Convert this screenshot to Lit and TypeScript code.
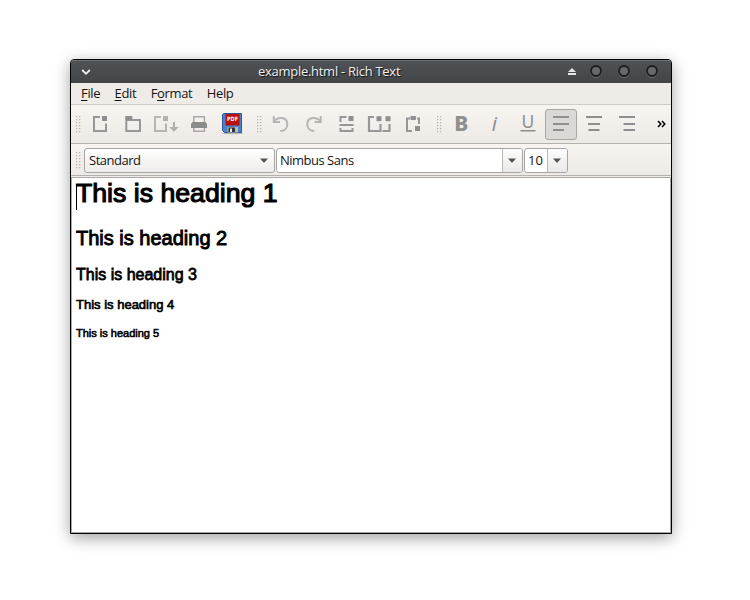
import { LitElement, html, css, svg } from "lit";
import { customElement } from "lit/decorators.js";

type Tool = { id: string; dim?: boolean; active?: boolean; art: unknown };

// Every glyph is drawn in a 32x31 button cell.
const fileTools: Tool[] = [
  { id: "New", art: svg`<path d="M15 8H9V22H21V14.5" fill="none" stroke="#979797" stroke-width="2"/><rect x="17" y="7" width="5" height="5"/>` },
  { id: "Open", art: svg`<path d="M8.3 11H22V22H8.3Z" fill="none" stroke="#979797" stroke-width="2"/><path d="M7.3 7H14.3V11H7.3Z"/>` },
  { id: "Save", dim: true, art: svg`<path d="M10 8H4V22H15V14.5" fill="none" stroke="#979797" stroke-width="2"/><rect x="12" y="7" width="5" height="5"/><path d="M22 13h2v5h3.8L23 22.8L18.2 18H22Z"/>` },
  { id: "Print", art: svg`<path d="M9.8 13V7.7H20.4V13M9.8 18V22.3H20.4V18" fill="none" stroke="#a8a8a8" stroke-width="1.5"/><path d="M7 15l1.5-2h13l1.5 2v4H7Z" fill="#8b8b8b"/>` },
  { id: "Export", art: svg`<ellipse cx="15.5" cy="24.3" rx="11" ry="1" fill="#bdbbb8"/><path d="M6.5 4.5H24.5V23.5H7.5L5.5 21.5V5.5Z" fill="#4a83ca" stroke="#2b5794"/><rect x="8.5" y="5" width="14" height="11.5" fill="#b90f0f"/><text x="15.5" y="12.4" text-anchor="middle" font-family="DejaVu Sans" font-weight="bold" font-size="6" letter-spacing="0" textLength="11" lengthAdjust="spacingAndGlyphs" fill="#fff">PDF</text><path d="M10.5 18h10.5v5.5H10.5Z" fill="#b9b9b2"/><rect x="11.5" y="18.5" width="6.5" height="4.5" fill="#333"/><rect x="13" y="19.5" width="2" height="3.5" fill="#e8e8e0"/>` },
];

const editTools: Tool[] = [
  { id: "Undo", dim: true, art: svg`<path d="M8.8 7V13H15M9.5 12.2C12 8 22 7 22.3 15C22.3 19.7 19 22 15.3 22" fill="none" stroke="#979797" stroke-width="2"/>` },
  { id: "Redo", dim: true, art: svg`<path d="M22.7 7V13H16.5M22 12.2C19.5 8 9.5 7 9.2 15C9.2 19.7 12.5 22 16.2 22" fill="none" stroke="#979797" stroke-width="2"/>` },
  { id: "Cut", art: svg`<path d="M9.5 13V8H15.5M8.5 16H22.5M9.5 19V22H21.5V19" fill="none" stroke="#979797" stroke-width="2"/><rect x="17.5" y="7" width="5" height="5"/>` },
  { id: "Copy", art: svg`<path d="M10 8H5V22H16.5V15M18.5 22H25.5V15" fill="none" stroke="#979797" stroke-width="2.2"/><rect x="12.5" y="7.2" width="5" height="5"/><rect x="21.5" y="7.2" width="5" height="5"/>` },
  { id: "Paste", art: svg`<path d="M13 9.5H10V22H15M20 9.5H22V15" fill="none" stroke="#979797" stroke-width="2"/><rect x="13.5" y="7" width="5.4" height="4"/><rect x="18" y="17" width="5" height="5"/>` },
];

const bar = (x: number, y: number, w: number) => svg`<rect x=${x} y=${y} width=${w} height="2"/>`;
const formatTools: Tool[] = [
  { id: "Bold", art: svg`<text x="8.3" y="22" font-family="Noto Sans" font-weight="800" font-size="21">B</text>` },
  { id: "Italic", art: svg`<text x="12.8" y="22" font-family="Noto Sans" font-style="italic" font-size="20">i</text>` },
  { id: "Underline", art: svg`<text x="9.6" y="19" font-family="Noto Sans" font-size="17.5">U</text><rect x="8.5" y="21" width="15" height="1.5"/>` },
  { id: "Left", active: true, art: svg`${bar(8, 7, 16)}${bar(8, 14, 16)}${bar(8, 20, 11)}` },
  { id: "Center", art: svg`${bar(8, 7, 16)}${bar(10, 14, 12)}${bar(10.5, 20, 11)}` },
  { id: "Right", art: svg`${bar(8, 7, 16)}${bar(12.5, 14, 11.5)}${bar(12.5, 20, 11.5)}` },
];

const button = (t: Tool) => html`
  <div class="tool ${t.dim ? "dim" : ""} ${t.active ? "active" : ""}" aria-label=${t.id}>
    <svg width="32" height="31" viewBox="0 0 32 31" fill="#8f8f8f">${t.art}</svg>
  </div>`;

const arrow = html`<svg width="8" height="5" viewBox="0 0 8 5"><path d="M0 0.5H8L4.5 4.5H3.5Z" fill="#555" /></svg>`;
const knob = html`<svg class="knob" width="14" height="14" viewBox="0 0 14 14">
  <circle cx="7" cy="7.6" r="5.8" fill="none" stroke="#707376" />
  <circle cx="7" cy="7" r="5" fill="#66696c" stroke="#1b1d1e" stroke-width="2" />
</svg>`;

@customElement("app-root")
export class AppRoot extends LitElement {
  static styles = css`
    :host { display: block; box-sizing: border-box; height: 600px; padding: 59px 78px 0 70px; background: #fff; overflow: hidden; font: 13px "Open Sans", "Noto Sans", sans-serif; letter-spacing: -0.35px; color: #141414; white-space: nowrap; }
    .window { box-sizing: border-box; width: 602px; height: 475px; border: 1px solid #000; border-radius: 4px 4px 0 0; display: flex; flex-direction: column; background: #efebe7; box-shadow: 0 4px 16px rgba(0, 0, 0, 0.37); overflow: hidden; }
    .title { height: 23px; box-sizing: border-box; border-top: 1px solid #6c6f72; background: linear-gradient(#4f5255, #434547); display: flex; align-items: center; color: #eee; text-shadow: 1px 1px 1px #111; }
    .chev { margin-left: 10px; }
    .caption { flex: 1; padding-left: 167px; padding-bottom: 2px; letter-spacing: -0.28px; }
    .eject { margin-right: 12px; margin-top: 1px; }
    .knob { margin-right: 14px; margin-top: -2px; }
    .knob:last-child { margin-right: 12px; }
    .menu { height: 22px; box-sizing: border-box; display: flex; align-items: center; padding-left: 10px; padding-bottom: 2px; border-bottom: 1px solid #cfccc8; }
    .menu span { margin-right: 14.4px; }
    .menu u { text-decoration-thickness: 1px; text-underline-offset: 2px; }
    .tools { height: 39px; box-sizing: border-box; display: flex; align-items: center; gap: 1px; background: linear-gradient(#f8f5f1, #edeae5); border-bottom: 1px solid #b5b2af; }
    .grip { width: 6px; height: 17px; background: radial-gradient(circle at 0.7px 0.7px, #bab7b3 0.7px, transparent 0.9px) 0 0 / 3px 3px; margin-left: 5px; margin-right: 2px; flex: none; }
    .g2 { margin-left: 7px; margin-right: 1px; }
    .g3 { margin-left: 7px; }
    .tool { width: 32px; height: 31px; flex: none; box-sizing: border-box; }
    .tool svg { display: block; }
    .dim { opacity: 0.65; }
    .active { border: 1px solid #aaa6a2; border-radius: 3px; background: #dcd8d5; }
    .active svg { margin: -1px; }
    .more { margin-left: 13px; }
    .fields { height: 32px; box-sizing: border-box; display: flex; align-items: center; background: linear-gradient(#f8f5f1, #edeae5); border-bottom: 1px solid #b5b2af; padding-top: 2px; }
    .fields .grip { margin-right: 2px; }
    .combo { box-sizing: border-box; height: 25px; border: 1px solid #a9a5a2; border-radius: 3px; display: flex; align-items: center; padding-left: 4px; background: #fff; margin-right: 1px; overflow: hidden; letter-spacing: -0.5px; }
    .combo span { flex: 1; padding-bottom: 2px; }
    .combo.plain { width: 191px; background: linear-gradient(#fefefe, #efedeb); padding-right: 6px; }
    .combo.font { width: 247px; padding-left: 3px; }
    .combo.size { width: 44px; padding-left: 3px; letter-spacing: 0; }
    .drop { width: 20px; box-sizing: border-box; height: 23px; padding-right: 1px; border-left: 1px solid #bab7b4; background: linear-gradient(#fdfdfd, #ebe9e7); display: flex; align-items: center; justify-content: center; }
    .doc { flex: 1; box-sizing: border-box; margin-top: 1px; border: 1px solid #aaa8a6; background: #fff; padding: 0 4px; font-family: "Liberation Sans", sans-serif; letter-spacing: 0; color: #000; }
    .line { font-weight: 400; margin: 0; -webkit-text-stroke: calc(0.035em + 0.2px) #000; }
    .h1 { font-size: 26.67px; line-height: 30px; height: 48px; position: relative; }
    .h1::before { content: ""; position: absolute; left: 0; top: 6px; width: 1px; height: 26px; background: #000; }
    .h2 { font-size: 20px; line-height: 24px; height: 39px; }
    .h3 { font-size: 16px; line-height: 20px; height: 32px; }
    .h4 { font-size: 13px; line-height: 16px; height: 29px; }
    .h5 { font-size: 11px; line-height: 14px; }
  `;

  render() {
    return html`
      <div class="window">
        <div class="title">
          <svg class="chev" width="10" height="8" viewBox="0 0 10 8"><path d="M1.2 2L5 5.8L8.8 2" fill="none" stroke="#eee" stroke-width="1.8" /></svg>
          <span class="caption">example.html - Rich Text</span>
          <svg class="eject" width="10" height="9" viewBox="0 0 10 9" fill="#e6e6e6"><path d="M5 0L9 4H1ZM1 5H9V7H1Z" /></svg>
          ${knob}${knob}${knob}
        </div>
        <div class="menu">
          <span><u>F</u>ile</span><span><u>E</u>dit</span><span>F<u>o</u>rmat</span><span>Help</span>
        </div>
        <div class="tools">
          <div class="grip"></div>
          ${fileTools.map(button)}
          <div class="grip g2"></div>
          ${editTools.map(button)}
          <div class="grip g3"></div>
          ${formatTools.map(button)}
          <svg class="more" width="9" height="8" viewBox="0 0 9 8"><path d="M1 1L3.8 4L1 7M5 1L7.8 4L5 7" fill="none" stroke="#000" stroke-width="1.5" /></svg>
        </div>
        <div class="fields">
          <div class="grip"></div>
          <div class="combo plain"><span>Standard</span>${arrow}</div>
          <div class="combo font"><span>Nimbus Sans</span><div class="drop">${arrow}</div></div>
          <div class="combo size"><span>10</span><div class="drop">${arrow}</div></div>
        </div>
        <div class="doc">
          <h1 class="line h1">This is heading 1</h1>
          <h2 class="line h2">This is heading 2</h2>
          <h3 class="line h3">This is heading 3</h3>
          <h4 class="line h4">This is heading 4</h4>
          <h5 class="line h5">This is heading 5</h5>
        </div>
      </div>
    `;
  }
}
